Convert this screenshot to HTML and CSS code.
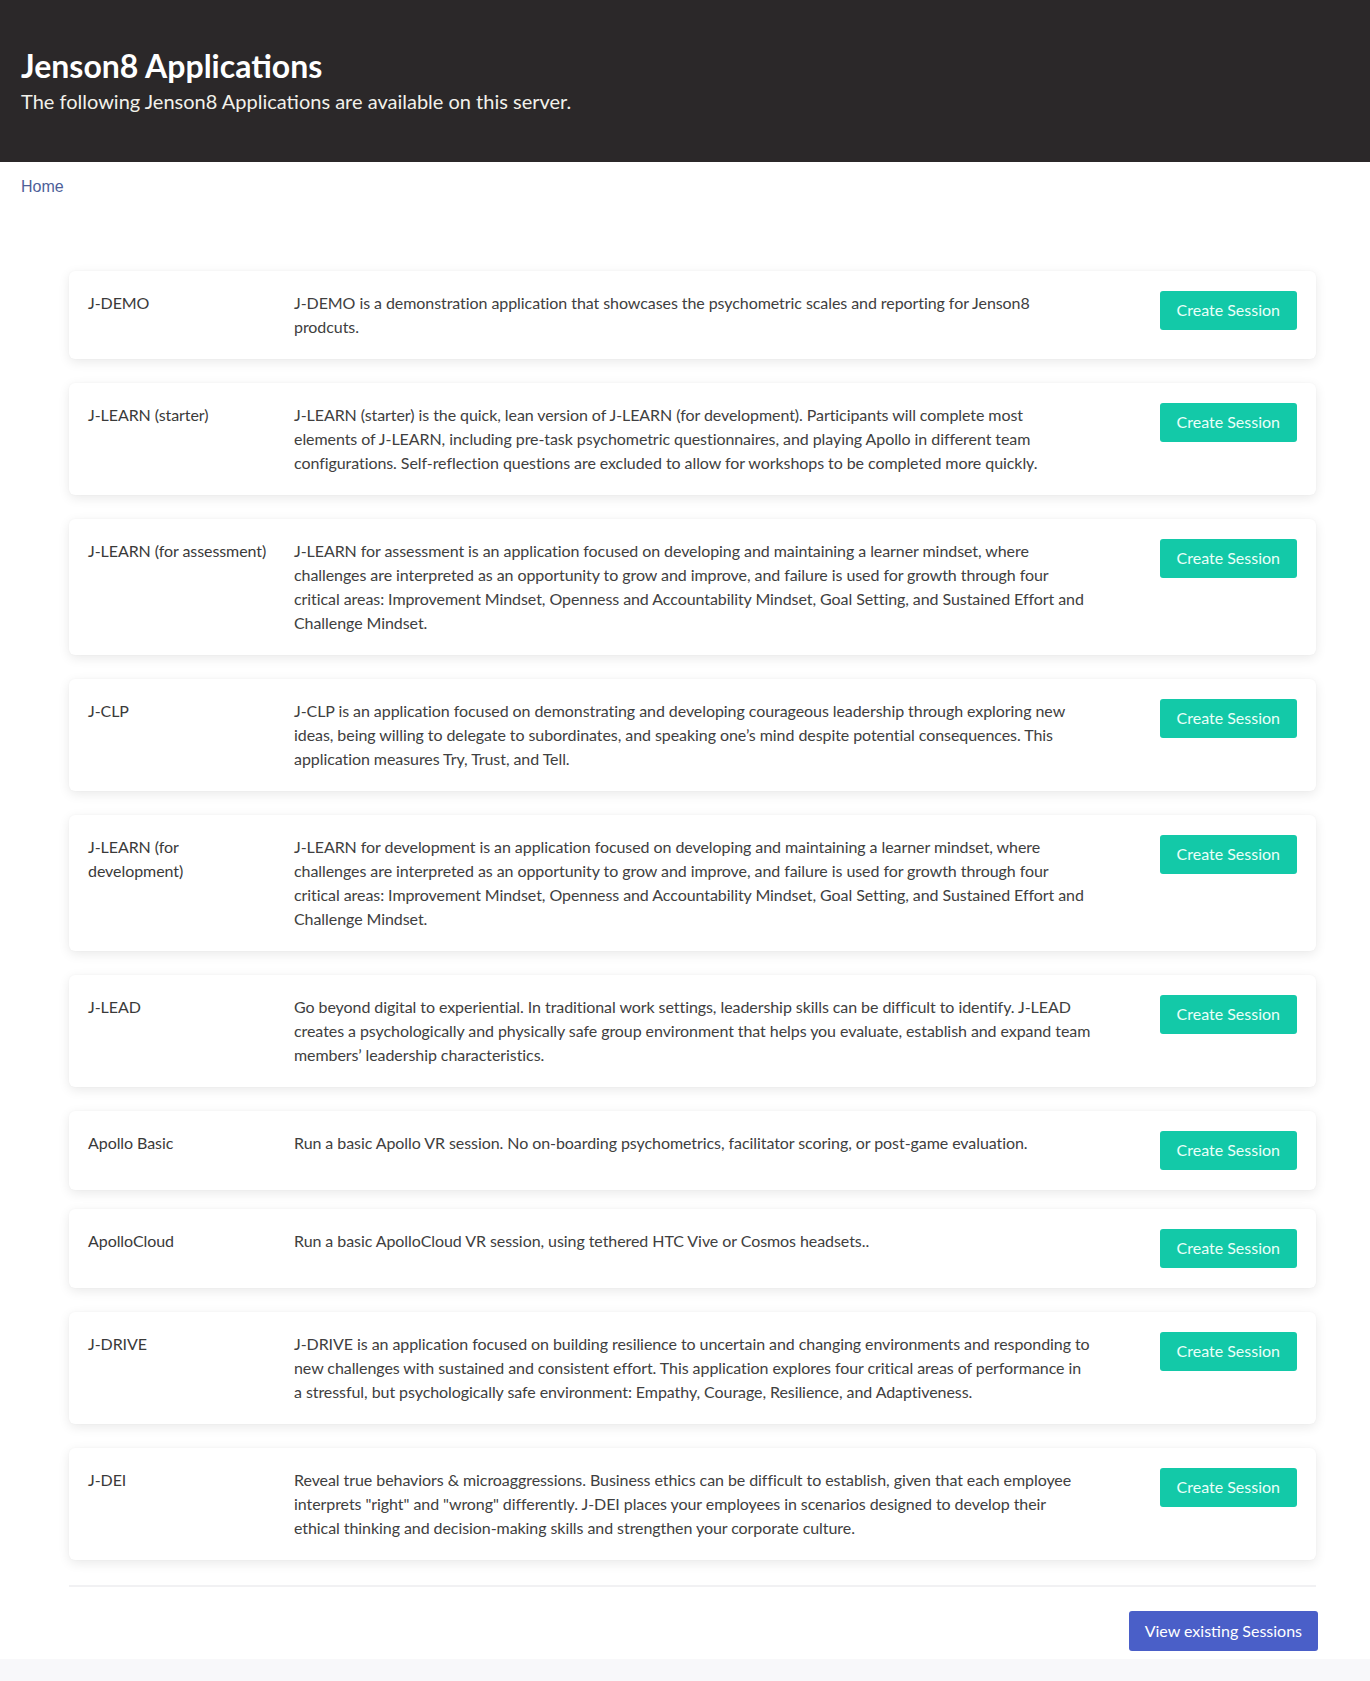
FILE: index.html
```html
<!DOCTYPE html>
<html lang="en">
<head>
<meta charset="utf-8">
<title>Jenson8 Applications</title>
<link rel="stylesheet" href="styles.css">
</head>
<body>
<header class="hero">
  <h1 class="hero-title">Jenson8 Applications</h1>
  <p class="hero-sub">The following Jenson8 Applications are available on this server.</p>
</header>
<main class="page">
  <nav class="crumbs"><a href="#" class="crumb">Home</a></nav>
  <section class="apps">
    <div class="app-card">
      <div class="app-name">J-DEMO</div>
      <div class="app-desc">J-DEMO is a demonstration application that showcases the psychometric scales and reporting for Jenson8 prodcuts.</div>
      <a href="#" class="btn-create">Create Session</a>
    </div>
    <div class="app-card">
      <div class="app-name">J-LEARN (starter)</div>
      <div class="app-desc">J-LEARN (starter) is the quick, lean version of J-LEARN (for development). Participants will complete most <span class="keep">elements of</span> J-LEARN, including pre-task psychometric questionnaires, and playing Apollo in different team configurations. Self-reflection questions are excluded to allow for workshops to be completed more quickly.</div>
      <a href="#" class="btn-create">Create Session</a>
    </div>
    <div class="app-card">
      <div class="app-name">J-LEARN (for assessment)</div>
      <div class="app-desc">J-LEARN for assessment is an application focused on developing and maintaining a learner mindset, where challenges are interpreted as an opportunity to grow and improve, and failure is used for growth through four critical areas: Improvement Mindset, Openness and Accountability Mindset, Goal Setting, and Sustained Effort and Challenge Mindset.</div>
      <a href="#" class="btn-create">Create Session</a>
    </div>
    <div class="app-card">
      <div class="app-name">J-CLP</div>
      <div class="app-desc">J-CLP is an application focused on demonstrating and developing courageous leadership through exploring new ideas, being willing to delegate to subordinates, and speaking one’s mind despite potential consequences. This application measures Try, Trust, and Tell.</div>
      <a href="#" class="btn-create">Create Session</a>
    </div>
    <div class="app-card">
      <div class="app-name">J-LEARN (for development)</div>
      <div class="app-desc">J-LEARN for development is an application focused on developing and maintaining a learner mindset, where challenges are interpreted as an opportunity to grow and improve, and failure is used for growth through four critical areas: Improvement Mindset, Openness and Accountability Mindset, Goal Setting, and Sustained Effort and Challenge Mindset.</div>
      <a href="#" class="btn-create">Create Session</a>
    </div>
    <div class="app-card">
      <div class="app-name">J-LEAD</div>
      <div class="app-desc">Go beyond digital to experiential. In traditional work settings, leadership skills can be difficult to identify. J-LEAD creates a psychologically and physically safe group environment that helps you evaluate, establish and expand team members’ leadership characteristics.</div>
      <a href="#" class="btn-create">Create Session</a>
    </div>
    <div class="app-card">
      <div class="app-name">Apollo Basic</div>
      <div class="app-desc">Run a basic Apollo VR session. No on-boarding psychometrics, facilitator scoring, or post-game evaluation.</div>
      <a href="#" class="btn-create">Create Session</a>
    </div>
    <div class="app-card app-card-tight">
      <div class="app-name">ApolloCloud</div>
      <div class="app-desc">Run a basic ApolloCloud VR session, using tethered HTC Vive or Cosmos headsets..</div>
      <a href="#" class="btn-create">Create Session</a>
    </div>
    <div class="app-card">
      <div class="app-name">J-DRIVE</div>
      <div class="app-desc">J-DRIVE is an application focused on building resilience to uncertain and changing environments and responding to new challenges with sustained and consistent effort. This application explores four critical areas of performance in <span class="keep">a stressful,</span> but psychologically safe environment: Empathy, Courage, Resilience, and Adaptiveness.</div>
      <a href="#" class="btn-create">Create Session</a>
    </div>
    <div class="app-card">
      <div class="app-name">J-DEI</div>
      <div class="app-desc">Reveal true behaviors &amp; microaggressions. Business ethics can be difficult to establish, given that each employee interprets "right" and "wrong" differently. J-DEI places your employees in scenarios designed to develop their ethical thinking and decision-making skills and strengthen your corporate culture.</div>
      <a href="#" class="btn-create">Create Session</a>
    </div>
  </section>
  <hr class="divider">
  <div class="actions">
    <a href="#" class="btn-view">View existing Sessions</a>
  </div>
</main>
<footer class="foot"></footer>
</body>
</html>
```

FILE: styles.css
```css
html, body {
  margin: 0;
  padding: 0;
}
body {
  background: #f8f8fa;
  font-family: Lato, "Open Sans", sans-serif;
  color: #3a3a3a;
}
.hero {
  background: #2b2829;
  height: 162px;
  box-sizing: border-box;
  padding: 47px 21px 0;
}
.hero-title {
  margin: 0;
  font-size: 32px;
  line-height: 38px;
  font-weight: 700;
  color: #ffffff;
}
.hero-sub {
  margin: 2px 0 0;
  font-size: 20px;
  line-height: 28px;
  color: #f2f1ea;
}
.page {
  background: #ffffff;
  padding: 13px 0 8px;
}
.crumbs {
  padding: 0 21px;
  font-family: "Liberation Sans", Arial, sans-serif;
  font-size: 16px;
  line-height: 24px;
}
.crumb {
  color: #4d6099;
  text-decoration: none;
}
.apps {
  margin: 72px 54px 0 69px;
  display: flex;
  flex-direction: column;
  gap: 24px;
}
.app-card {
  display: grid;
  grid-template-columns: 206px 800px 1fr;
  align-items: start;
  padding: 20px 19px;
  background: #ffffff;
  border-radius: 6px;
  box-shadow: 0 3px 12px rgba(0, 0, 0, 0.09), 0 0 2px rgba(0, 0, 0, 0.04);
  font-size: 16px;
  line-height: 24px;
  letter-spacing: -0.07px;
}
.app-card-tight {
  margin-top: -5px;
}
.app-name {
  color: #3a3a3a;
  padding-right: 20px;
}
.app-desc {
  color: #404040;
}
.keep {
  white-space: nowrap;
}
.btn-create {
  justify-self: end;
  display: inline-block;
  background: #13c9a8;
  color: #eafff9;
  text-decoration: none;
  font-size: 16px;
  line-height: 24px;
  letter-spacing: 0;
  padding: 7px 17px 8px;
  border-radius: 3px;
}
.divider {
  margin: 25px 54px 0 69px;
  border: 0;
  border-top: 2px solid #f1f1f3;
}
.actions {
  display: flex;
  justify-content: flex-end;
  margin: 24px 52px 0 69px;
}
.btn-view {
  display: inline-block;
  background: #4a5fc8;
  color: #ffffff;
  text-decoration: none;
  font-size: 16px;
  line-height: 24px;
  padding: 8px 16px;
  border-radius: 3px;
}
.foot {
  height: 24px;
  background: #f8f8fa;
}
```
